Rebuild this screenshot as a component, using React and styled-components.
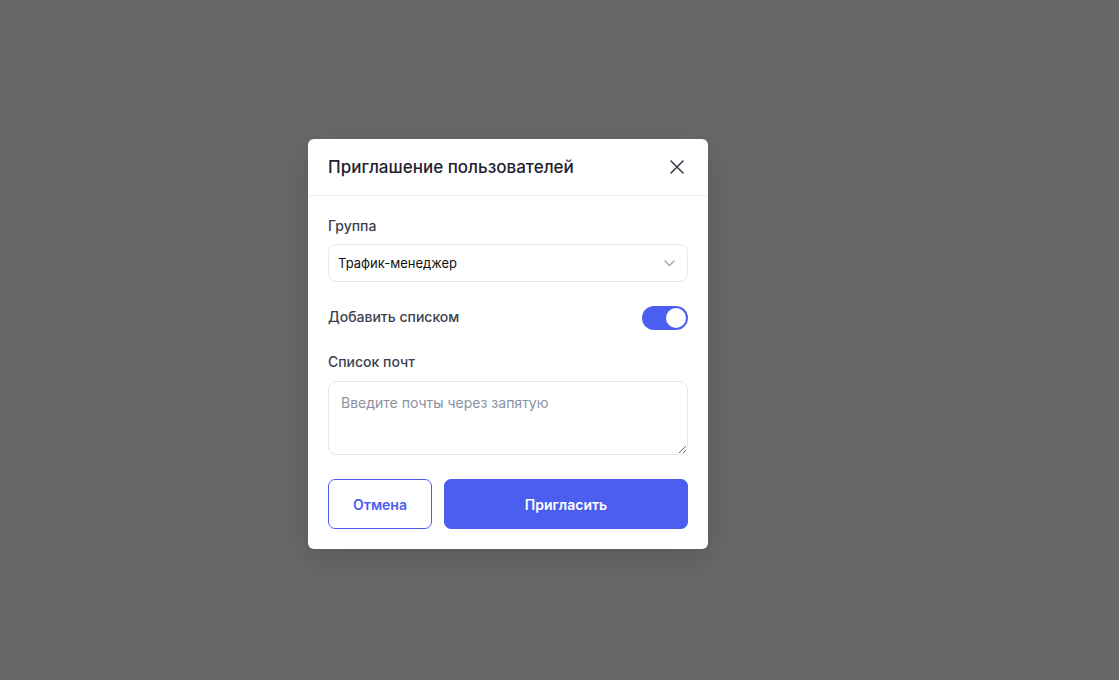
import { useState } from 'react';
import styled, { createGlobalStyle } from 'styled-components';

const GlobalStyle = createGlobalStyle`
  html, body {
    margin: 0;
    padding: 0;
    height: 100%;
  }
  body {
    font-family: Inter, "Noto Sans", sans-serif;
    background: #686868;
  }
  #root {
    height: 100%;
  }
`;

const Overlay = styled.div`
  display: flex;
  justify-content: center;
  align-items: center;
  width: 100vw;
  height: 100vh;
  box-sizing: border-box;
  padding-right: 103px;
  background: #686868;
`;

const Modal = styled.div`
  display: flex;
  flex-direction: column;
  width: 400px;
  background: #ffffff;
  border-radius: 6px;
  box-shadow: 0 10px 30px rgba(0, 0, 0, 0.15);
  margin-top: 8px;
`;

const Header = styled.div`
  display: flex;
  align-items: center;
  justify-content: space-between;
  height: 56px;
  padding: 0 20px;
  border-bottom: 1px solid #eef0f3;
`;

const Title = styled.h2`
  margin: 0;
  font-size: 17px;
  font-weight: 500;
  letter-spacing: 0;
  color: #1f2230;
`;

const CloseBtn = styled.button`
  display: flex;
  align-items: center;
  justify-content: center;
  width: 24px;
  height: 24px;
  padding: 0;
  margin-right: -1px;
  border: none;
  background: none;
  color: #3a3f4b;
  cursor: pointer;
`;

const Body = styled.div`
  display: flex;
  flex-direction: column;
  padding: 20px;
`;

const Label = styled.label`
  display: block;
  font-size: 14px;
  line-height: 20px;
  font-weight: 500;
  color: #3b4150;
  margin-bottom: ${(p) => p.gap || 8}px;
`;

const SelectBox = styled.div`
  display: flex;
  align-items: center;
  justify-content: space-between;
  height: 38px;
  box-sizing: border-box;
  padding: 0 12px 0 9px;
  border: 1px solid #e4e6ec;
  border-radius: 8px;
  font-size: 13px;
  color: #111111;
  margin-bottom: 24px;
`;

const ToggleRow = styled.div`
  display: flex;
  align-items: center;
  justify-content: space-between;
  height: 24px;
  margin-bottom: 22px;
`;

const RowText = styled.span`
  font-size: 14px;
  line-height: 20px;
  font-weight: 500;
  color: #3b4150;
  margin-bottom: 3px;
`;

const Switch = styled.button`
  position: relative;
  width: 46px;
  height: 24px;
  padding: 0;
  border: none;
  border-radius: 12px;
  background: ${(p) => (p.on ? '#4b5ef0' : '#d1d5db')};
  cursor: pointer;
`;

const Knob = styled.span`
  position: absolute;
  top: 2px;
  left: ${(p) => (p.on ? '24px' : '2px')};
  width: 20px;
  height: 20px;
  border-radius: 50%;
  background: #ffffff;
  transition: left 0.15s;
`;

const TextArea = styled.textarea`
  display: block;
  width: 100%;
  height: 74px;
  box-sizing: border-box;
  padding: 12px;
  border: 1px solid #e4e6ec;
  border-radius: 8px;
  font-family: Inter, "Noto Sans", sans-serif;
  font-size: 14px;
  color: #111111;
  resize: vertical;
  outline: none;
  margin-bottom: 24px;
  &::placeholder {
    color: #8b92a3;
  }
`;

const Actions = styled.div`
  display: flex;
  gap: 12px;
`;

const Button = styled.button`
  height: 50px;
  box-sizing: border-box;
  border-radius: 7px;
  font-family: Inter, "Noto Sans", sans-serif;
  font-size: 14px;
  font-weight: 600;
  cursor: pointer;
  border: 1px solid #4b5ef0;
  background: ${(p) => (p.primary ? '#4b5ef0' : '#ffffff')};
  color: ${(p) => (p.primary ? '#ffffff' : '#4b5ef0')};
  width: ${(p) => (p.primary ? 'auto' : '104px')};
  flex: ${(p) => (p.primary ? 1 : 'none')};
`;

const App = () => {
  const [asList, setAsList] = useState(true);

  return (
    <Overlay>
      <GlobalStyle />
      <Modal>
        <Header>
          <Title>Приглашение пользователей</Title>
          <CloseBtn>
            <svg width="16" height="16" viewBox="0 0 16 16" fill="none">
              <path
                d="M2 2L14 14M14 2L2 14"
                stroke="currentColor"
                strokeWidth="1.6"
                strokeLinecap="round"
              />
            </svg>
          </CloseBtn>
        </Header>
        <Body>
          <Label>Группа</Label>
          <SelectBox>
            <span>Трафик-менеджер</span>
            <svg width="11" height="7" viewBox="0 0 11 7" fill="none">
              <path
                d="M1 1L5.5 5.5L10 1"
                stroke="#9aa0ac"
                strokeWidth="1.2"
                strokeLinecap="round"
                strokeLinejoin="round"
              />
            </svg>
          </SelectBox>
          <ToggleRow>
            <RowText>Добавить списком</RowText>
            <Switch on={asList} onClick={() => setAsList(!asList)}>
              <Knob on={asList} />
            </Switch>
          </ToggleRow>
          <Label gap={9}>Список почт</Label>
          <TextArea placeholder="Введите почты через запятую" />
          <Actions>
            <Button>Отмена</Button>
            <Button primary>Пригласить</Button>
          </Actions>
        </Body>
      </Modal>
    </Overlay>
  );
};

export default App;
